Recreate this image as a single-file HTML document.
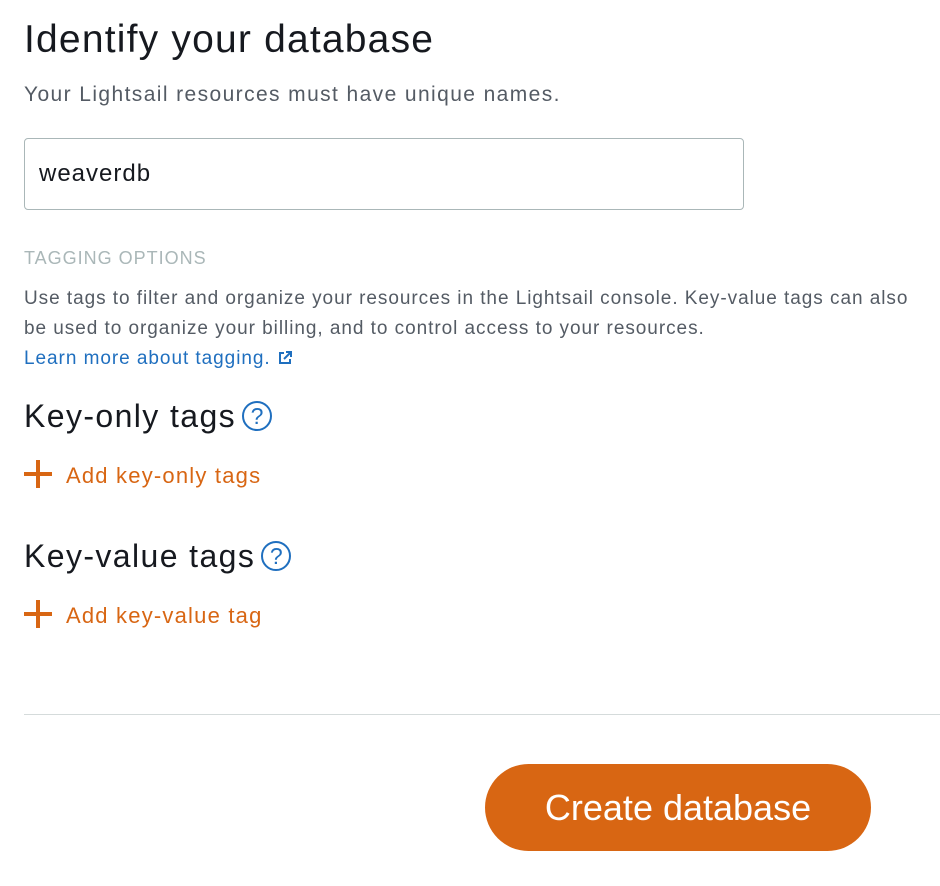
<!DOCTYPE html>
<html><head><style>
body{margin:0;width:940px;height:886px;background:#fff;font-family:"Liberation Sans",sans-serif;position:relative;overflow:hidden}
.a{position:absolute;white-space:nowrap}
h1{position:absolute;left:24px;top:18px;margin:0;font-weight:400;font-size:39px;letter-spacing:1.2px;color:#16191f}
.sub{left:24px;top:83px;font-size:21px;letter-spacing:1.4px;color:#545b64}
.inp{position:absolute;left:24px;top:138px;width:718px;height:70px;border:1px solid #aab7b8;border-radius:4px}
.inp span{position:absolute;left:14px;top:21px;font-size:24px;letter-spacing:1px;color:#16191f}
.tag{left:24px;top:248px;font-size:18px;letter-spacing:1px;color:#aab7b8}
.p{left:24px;top:284px;font-size:19px;letter-spacing:0.95px;line-height:30px;color:#545b64}
.p a{color:#1f6fbf;text-decoration:none}
.h2{left:24px;font-size:32px;letter-spacing:1.4px;color:#16191f}
.q{display:inline-block;width:30px;height:30px;border:2px solid #1f6fbf;border-radius:50%;color:#1f6fbf;font-size:23px;line-height:27px;text-align:center;box-sizing:border-box;vertical-align:3px;margin-left:6px;letter-spacing:0}
.add{left:24px;font-size:22px;letter-spacing:1.2px;color:#d86613}
.plus{display:inline-block;position:relative;width:28px;height:28px;vertical-align:-5px;margin-right:14px}
.plus:before{content:"";position:absolute;left:0;top:12px;width:28px;height:4px;background:#d86613}
.plus:after{content:"";position:absolute;left:12px;top:0;width:4px;height:28px;background:#d86613}
hr{position:absolute;left:24px;top:714px;width:916px;margin:0;border:0;border-top:1px solid #d5dbdb}
.btn{position:absolute;left:485px;top:764px;width:386px;height:87px;border-radius:44px;background:#d86613;color:#fff;font-size:36px;text-align:center;line-height:87px}
</style></head><body>
<h1>Identify your database</h1>
<div class="a sub">Your Lightsail resources must have unique names.</div>
<div class="inp"><span>weaverdb</span></div>
<div class="a tag">TAGGING OPTIONS</div>
<div class="a p">Use tags to filter and organize your resources in the Lightsail console. Key-value tags can also<br>be used to organize your billing, and to control access to your resources.<br><a>Learn more about tagging. <svg width="16" height="16" viewBox="0 0 16 16" style="vertical-align:-2px"><path d="M7 3H3v10h10V9M9 2h5v5M14 2L7 9" fill="none" stroke="#1f6fbf" stroke-width="2"/></svg></a></div>
<div class="a h2" style="top:398px">Key-only tags<span class="q">?</span></div>
<div class="a add" style="top:460px"><span class="plus"></span>Add key-only tags</div>
<div class="a h2" style="top:538px">Key-value tags<span class="q">?</span></div>
<div class="a add" style="top:600px"><span class="plus"></span>Add key-value tag</div>
<hr>
<div class="btn">Create database</div>
</body></html>
